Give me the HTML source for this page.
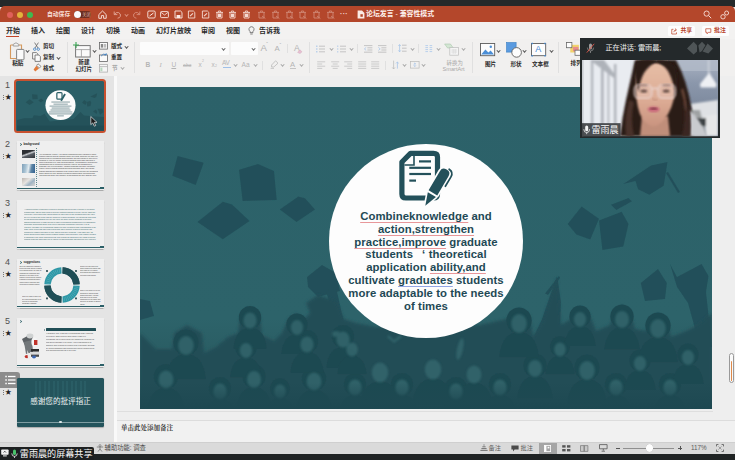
<!DOCTYPE html>
<html lang="zh">
<head>
<meta charset="utf-8">
<title>论坛发言 - 兼容性模式</title>
<style>
*{box-sizing:border-box;margin:0;padding:0}
html,body{width:735px;height:460px;overflow:hidden;background:#ececec}
body{position:relative;font-family:"Liberation Sans","Noto Sans CJK SC",sans-serif;color:#333;font-size:7px;line-height:1}
.a{position:absolute}
.t{position:absolute;white-space:nowrap;line-height:1}
svg{position:absolute;overflow:visible}
/* top */
#topdark{left:0;top:0;width:735px;height:7px;background:#25292a}
#titlebar{left:0;top:6.4px;width:735px;height:16px;background:#b4472b;border-radius:5px 5px 0 0}
#tabs{left:0;top:22.4px;width:735px;height:16.6px;background:#f3f2f1}
#ribbon{left:0;top:39px;width:735px;height:38px;background:#f1f0ef;border-bottom:1.6px solid #dedede}
.tab{top:27.1px;font-size:7px;color:#2b2b2b}
.rl{font-size:5.6px;color:#2a2a2a}
.sep{position:absolute;width:1px;background:#e0e0e0}
.dd{position:absolute;width:2.5px;height:2.5px;border-right:0.85px solid currentColor;border-bottom:0.85px solid currentColor;transform:translate(0.3px,-1px) rotate(45deg);color:#555}
.gi{stroke:#a9a9a9;fill:none;stroke-width:0.8}
/* panels */
#thumbs{left:0;top:76px;width:114px;height:367px;background:#e4e4e4}
#vdiv{left:114px;top:76px;width:2.6px;height:367px;background:#f9f9f9}
#work{left:116.6px;top:76px;width:619px;height:345px;background:#eeeeee}
#notes{left:116.6px;top:420.4px;width:619px;height:22px;background:#f1f1f1;border-top:1px solid #dcdcdc}
#status{left:0;top:442px;width:735px;height:12px;background:#dadada;border-top:1px solid #cfcfcf}
#botdark{left:0;top:454px;width:735px;height:6px;background:#1f2324}
.num{font-size:9px;color:#505050;left:5px}
.star{font-size:6.6px;color:#222;left:5px}
.ur{text-decoration:underline;text-decoration-color:#e8979a;text-decoration-thickness:0.9px;text-underline-offset:1.6px;text-decoration-skip-ink:none}
.ub{text-decoration:underline;text-decoration-color:#93a6e6;text-decoration-thickness:1.3px;text-underline-offset:1.7px;text-decoration-skip-ink:none}
.th{position:absolute;left:17px;width:87px;height:49px;background:#efefef;overflow:hidden;box-shadow:0 0.5px 1px rgba(0,0,0,.25)}
</style>
</head>
<body>
<!-- ======= top chrome ======= -->
<div class="a" id="topdark"></div>
<div class="a" id="titlebar"></div>
<div class="a" id="tabs"></div>
<div class="a" id="ribbon"></div>
<!--TITLEBAR-->
<div class="a" style="left:6.6px;top:11.6px;width:6px;height:6px;border-radius:50%;background:#e0605a"></div>
<div class="a" style="left:17px;top:11.6px;width:6px;height:6px;border-radius:50%;background:#e2b33c"></div>
<div class="a" style="left:27.3px;top:11.6px;width:6px;height:6px;border-radius:50%;background:#3fb950"></div>
<div class="t" style="left:47px;top:11.6px;font-size:5.8px;color:#f6ddd6;font-weight:bold">自动保存</div>
<div class="a" style="left:74px;top:11.4px;width:16.6px;height:6.6px;border-radius:3.3px;background:#6d2e1f"></div>
<div class="a" style="left:74.2px;top:11.2px;width:7px;height:7px;border-radius:50%;background:#fbfbfb"></div>
<div class="t" style="left:82.3px;top:12.6px;font-size:4.2px;color:#d9b5ab">关闭</div>
<svg style="left:98px;top:10px" width="9" height="9" viewBox="0 0 9 9"><path d="M0.8,4.6 L4.5,1 L8.2,4.6 V8.3 H5.6 V5.6 H3.4 V8.3 H0.8 Z" fill="none" stroke="#fbeae5" stroke-width="0.9" stroke-linejoin="round"/></svg>
<svg style="left:112.5px;top:10px" width="9" height="9" viewBox="0 0 9 9"><path d="M1.2,1.5 V4.6 H4.3 M1.4,4.4 Q3.2,1.8 5.6,2.6 Q8,3.6 7.4,6.2 Q6.8,8 4.6,8.2" fill="none" stroke="#e3a898" stroke-width="0.9"/></svg>
<svg style="left:132px;top:10px" width="9" height="9" viewBox="0 0 9 9"><path d="M7.8,1.5 V4.6 H4.7 M7.6,4.4 Q5.8,1.8 3.4,2.6 Q1,3.6 1.6,6.2 Q2.2,8 4.4,8.2" fill="none" stroke="#d98f7c" stroke-width="0.9"/></svg>
<svg style="left:146.5px;top:10px" width="9" height="9" viewBox="0 0 9 9"><rect x="0.8" y="1" width="7.4" height="7" rx="1.2" fill="none" stroke="#fbeae5" stroke-width="0.9"/><path d="M2.5,6 L6.5,3" stroke="#fbeae5" stroke-width="1"/></svg>
<svg style="left:160px;top:10px" width="9" height="9" viewBox="0 0 9 9"><rect x="0.6" y="1.6" width="7.8" height="6" rx="0.8" fill="none" stroke="#fbeae5" stroke-width="0.9"/><path d="M0.8,2.2 L4.5,5 L8.2,2.2" fill="none" stroke="#fbeae5" stroke-width="0.8"/></svg>
<svg style="left:173.5px;top:10px" width="9" height="9" viewBox="0 0 9 9"><path d="M1,1 H6.6 L8,2.4 V8 H1 Z" fill="none" stroke="#fbeae5" stroke-width="0.9"/><rect x="2.6" y="5" width="3.8" height="3" fill="#fbeae5"/></svg>
<svg style="left:187px;top:10px" width="9" height="9" viewBox="0 0 9 9"><path d="M1.4,1 H6.4 L7.8,2.4 V8 H1.4 Z" fill="none" stroke="#f4d9d1" stroke-width="0.9"/><path d="M3,6.2 L6,3.4" stroke="#f4d9d1" stroke-width="1.1"/></svg>
<svg style="left:200.75px;top:10px" width="9" height="9" viewBox="0 0 9 9"><path d="M1.4,1 H6.4 L7.8,2.4 V8 H1.4 Z" fill="none" stroke="#f4d9d1" stroke-width="0.9"/><path d="M3,6.2 L6,3.4" stroke="#f4d9d1" stroke-width="1.1"/></svg>
<svg style="left:214.5px;top:10px" width="9" height="9" viewBox="0 0 9 9"><path d="M1,2.4 H8 M2,2.4 V8 H7 V2.4 M3.4,2.2 V1 H5.6 V2.2" fill="none" stroke="#f4d9d1" stroke-width="0.9"/><rect x="3" y="3.6" width="3" height="3.4" fill="#f4d9d1"/></svg>
<svg style="left:228.25px;top:10px" width="9" height="9" viewBox="0 0 9 9"><path d="M1,2.4 H8 M2,2.4 V8 H7 V2.4 M3.4,2.2 V1 H5.6 V2.2" fill="none" stroke="#f4d9d1" stroke-width="0.9"/><rect x="3" y="3.6" width="3" height="3.4" fill="#f4d9d1"/></svg>
<svg style="left:242px;top:10px" width="9" height="9" viewBox="0 0 9 9"><path d="M1,2.4 H8 M2,2.4 V8 H7 V2.4 M3.4,2.2 V1 H5.6 V2.2" fill="none" stroke="#f4d9d1" stroke-width="0.9"/><rect x="3" y="3.6" width="3" height="3.4" fill="#f4d9d1"/></svg>
<svg style="left:257px;top:10px" width="9" height="9" viewBox="0 0 9 9" opacity=".45"><path d="M1,2.4 H8 M2,2.4 V8 H7 V2.4 M3.4,2.2 V1 H5.6 V2.2" fill="none" stroke="#f4d9d1" stroke-width="0.9"/><path d="M5,6 L8.4,8.6" stroke="#f4d9d1" stroke-width="0.9"/></svg>
<svg style="left:270.75px;top:10px" width="9" height="9" viewBox="0 0 9 9" opacity=".45"><path d="M1,2.4 H8 M2,2.4 V8 H7 V2.4 M3.4,2.2 V1 H5.6 V2.2" fill="none" stroke="#f4d9d1" stroke-width="0.9"/><path d="M5,6 L8.4,8.6" stroke="#f4d9d1" stroke-width="0.9"/></svg>
<svg style="left:284.5px;top:10px" width="9" height="9" viewBox="0 0 9 9" opacity=".45"><path d="M1,2.4 H8 M2,2.4 V8 H7 V2.4 M3.4,2.2 V1 H5.6 V2.2" fill="none" stroke="#f4d9d1" stroke-width="0.9"/><path d="M5,6 L8.4,8.6" stroke="#f4d9d1" stroke-width="0.9"/></svg>
<svg style="left:298.25px;top:10px" width="9" height="9" viewBox="0 0 9 9" opacity=".45"><path d="M1,2.4 H8 M2,2.4 V8 H7 V2.4 M3.4,2.2 V1 H5.6 V2.2" fill="none" stroke="#f4d9d1" stroke-width="0.9"/><path d="M5,6 L8.4,8.6" stroke="#f4d9d1" stroke-width="0.9"/></svg>
<svg style="left:312px;top:10px" width="9" height="9" viewBox="0 0 9 9" opacity=".45"><path d="M1,2.4 H8 M2,2.4 V8 H7 V2.4 M3.4,2.2 V1 H5.6 V2.2" fill="none" stroke="#f4d9d1" stroke-width="0.9"/><path d="M5,6 L8.4,8.6" stroke="#f4d9d1" stroke-width="0.9"/></svg>
<svg style="left:325.75px;top:10px" width="9" height="9" viewBox="0 0 9 9" opacity=".45"><path d="M1,2.4 H8 M2,2.4 V8 H7 V2.4 M3.4,2.2 V1 H5.6 V2.2" fill="none" stroke="#f4d9d1" stroke-width="0.9"/><path d="M5,6 L8.4,8.6" stroke="#f4d9d1" stroke-width="0.9"/></svg>
<div class="dd" style="left:125.4px;top:14px;color:#d98f7c"></div>
<div class="t" style="left:340px;top:10.2px;font-size:7px;color:#f4d9d1;font-weight:bold;letter-spacing:.3px">···</div>
<svg style="left:356.5px;top:10px" width="8" height="9" viewBox="0 0 8 9"><path d="M0.6,0.6 H5 L7.4,3 V8.4 H0.6 Z" fill="#fbeae5"/><path d="M3.4,4.2 h2.4 v2.6 h-2.4z" fill="#b4472b"/></svg>
<div class="t" style="left:366px;top:11.2px;font-size:6.9px;color:#fdf1ee;font-weight:bold">论坛发言 <span style="font-weight:normal"> - </span> 兼容性模式</div>
<svg style="left:702.6px;top:9.9px" width="9" height="9" viewBox="0 0 9 9"><circle cx="3.6" cy="3.6" r="2.6" fill="none" stroke="#f6ddd6" stroke-width="0.9"/><path d="M5.6,5.6 L8.2,8.2" stroke="#f6ddd6" stroke-width="1"/></svg>
<svg style="left:720px;top:9.5px" width="10" height="10" viewBox="0 0 10 10"><circle cx="6.6" cy="3" r="2" fill="none" stroke="#f6ddd6" stroke-width="0.9"/><circle cx="3" cy="6.8" r="2.2" fill="none" stroke="#f6ddd6" stroke-width="0.9"/></svg>
<!--/TITLEBAR-->
<!--TABS-->
<div class="t tab" style="left:6px;font-weight:bold">开始</div>
<div class="t tab" style="left:31px;font-weight:bold">插入</div>
<div class="t tab" style="left:56px;font-weight:bold">绘图</div>
<div class="t tab" style="left:81px;font-weight:bold">设计</div>
<div class="t tab" style="left:106px;font-weight:bold">切换</div>
<div class="t tab" style="left:131px;font-weight:bold">动画</div>
<div class="t tab" style="left:156px;font-weight:bold">幻灯片放映</div>
<div class="t tab" style="left:201px;font-weight:bold">审阅</div>
<div class="t tab" style="left:226px;font-weight:bold">视图</div>
<div class="a" style="left:6px;top:35.5px;width:13.4px;height:1.3px;background:#c0452a"></div>
<svg style="left:248px;top:26px" width="7" height="10" viewBox="0 0 7 10"><path d="M3.5,0.7 A2.6,2.6 0 0 1 5,5.4 V6.6 H2 V5.4 A2.6,2.6 0 0 1 3.5,0.7 Z M2.3,8 H4.7" fill="none" stroke="#555" stroke-width="0.7"/></svg>
<div class="t tab" style="left:259px;font-weight:bold">告诉我</div>
<div class="a" style="left:668.4px;top:26px;width:26.4px;height:10.2px;background:#fdfdfd;border-radius:1.5px"></div>
<svg style="left:671.4px;top:27.8px" width="6.6" height="6.6" viewBox="0 0 7 7"><path d="M2.6,1.4 H0.8 V6.4 H5.8 V4.6 M3,4.4 Q3.2,2 5.4,2 M4.2,0.6 L5.8,2 L4.2,3.4" fill="none" stroke="#bf4a2f" stroke-width="0.8"/></svg>
<div class="t" style="left:680.4px;top:28.3px;font-size:5.9px;color:#b8432a;font-weight:bold">共享</div>
<div class="a" style="left:702px;top:26px;width:26.8px;height:10.2px;background:#fdfdfd;border-radius:1.5px"></div>
<svg style="left:705px;top:27.9px" width="6.6" height="6.6" viewBox="0 0 7 7"><path d="M0.8,0.8 H6.2 V4.6 H3.6 L2.2,6.2 V4.6 H0.8 Z" fill="none" stroke="#bf4a2f" stroke-width="0.8" stroke-linejoin="round"/></svg>
<div class="t" style="left:714px;top:28.3px;font-size:5.9px;color:#b8432a;font-weight:bold">批注</div>
<!--/TABS-->
<!--RIBBON-->
<svg style="left:8px;top:42px" width="17" height="19" viewBox="0 0 17 19" ><path d="M2.5,3 H5 M11,3 H13.5 V7 M2.5,3 V16.5 H8" fill="none" stroke="#d69a5e" stroke-width="1.1"/><path d="M5.2,4 V2.4 L8,0.8 L10.8,2.4 V4 Z" fill="#f5f5f5" stroke="#8a8a8a" stroke-width="0.8"/><rect x="8.6" y="7.4" width="7.4" height="10.4" rx="0.8" fill="#fafafa" stroke="#777" stroke-width="0.9"/></svg>
<div class="dd" style="left:25.5px;top:50px;color:#555"></div>
<div class="t rl" style="left:12.2px;top:61px;font-weight:bold">粘贴</div>
<svg style="left:33px;top:42px" width="7" height="9" viewBox="0 0 7 9" ><path d="M1.6,0.6 L5,6 M5.4,0.6 L2,6" stroke="#666" stroke-width="0.8" fill="none"/><circle cx="1.7" cy="7.2" r="1.2" fill="none" stroke="#3b7fc4" stroke-width="0.8"/><circle cx="5.3" cy="7.2" r="1.2" fill="none" stroke="#3b7fc4" stroke-width="0.8"/></svg>
<div class="t rl" style="left:43px;top:44px;font-weight:bold">剪切</div>
<svg style="left:32px;top:52px" width="9" height="10" viewBox="0 0 9 10" ><path d="M0.6,0.6 H4.4 L6,2.2 V7 H0.6 Z" fill="#fafafa" stroke="#666" stroke-width="0.8"/><path d="M3,3 H6.8 L8.4,4.6 V9.4 H3 Z" fill="#fafafa" stroke="#666" stroke-width="0.8"/></svg>
<div class="t rl" style="left:43px;top:54.6px;font-weight:bold">复制</div>
<div class="dd" style="left:57px;top:56.5px;color:#555"></div>
<svg style="left:32.5px;top:63px" width="9" height="9" viewBox="0 0 9 9" ><path d="M5,0.8 L8,3.4 L6.4,5 L3.6,2.4 Z" fill="#fafafa" stroke="#666" stroke-width="0.7"/><path d="M3.4,2.8 L6,5.4 L2.2,8.4 L0.6,6.6 Z" fill="#e07a3a"/></svg>
<div class="t rl" style="left:43px;top:66px;font-weight:bold">格式</div>
<div class="sep" style="left:67px;top:42px;height:31px"></div>
<svg style="left:72.5px;top:41.5px" width="18" height="16" viewBox="0 0 18 16" ><rect x="2.6" y="3.6" width="14.6" height="11.4" fill="#fafafa" stroke="#777" stroke-width="1"/><path d="M2.6,7.6 H17.2 M8.4,7.6 V15" stroke="#999" stroke-width="0.8" fill="none"/><path d="M3,0 V6 M0,3 H6" stroke="#3aa655" stroke-width="1.1"/></svg>
<div class="dd" style="left:92.5px;top:50px;color:#555"></div>
<div class="t rl" style="left:78.3px;top:60.2px;font-weight:bold">新建</div>
<div class="t rl" style="left:75.4px;top:67px;font-weight:bold">幻灯片</div>
<svg style="left:99px;top:42px" width="9" height="8" viewBox="0 0 9 8" ><rect x="0.5" y="0.5" width="8" height="6.6" fill="#fafafa" stroke="#666" stroke-width="0.8"/><rect x="1.8" y="2" width="2.4" height="3.6" fill="#888"/><rect x="5" y="2" width="2.2" height="3.6" fill="#bbb"/></svg>
<div class="t rl" style="left:111px;top:44px;font-weight:bold">版式</div>
<div class="dd" style="left:125px;top:46px;color:#555"></div>
<svg style="left:99px;top:52.6px" width="9" height="9" viewBox="0 0 9 9" ><rect x="0.5" y="2" width="8" height="6.4" fill="#fafafa" stroke="#666" stroke-width="0.8"/><path d="M2,3.2 Q4,0 7,1.6 M7.2,0.2 V2 H5.4" fill="none" stroke="#3b7fc4" stroke-width="0.8"/></svg>
<div class="t rl" style="left:111px;top:54.6px;font-weight:bold">重置</div>
<svg style="left:99px;top:63.5px" width="9" height="9" viewBox="0 0 9 9" ><rect x="0.5" y="0.5" width="8" height="7.6" fill="#f6f6f6" stroke="#b0b0b0" stroke-width="0.8"/><path d="M0.5,2.6 H8.5" stroke="#b0b0b0" stroke-width="0.8"/><rect x="1.4" y="3.6" width="2" height="3.6" fill="#b7d6bd"/></svg>
<div class="t rl" style="left:112px;top:65.8px;color:#a8a8a8;font-weight:bold">节</div>
<div class="dd" style="left:120.5px;top:67.4px;color:#aaa"></div>
<div class="sep" style="left:134px;top:42px;height:31px"></div>
<div class="a" style="left:140px;top:42.2px;width:88.5px;height:12.4px;background:#fcfcfc;border-radius:1px"></div>
<div class="dd" style="left:222px;top:47.6px;color:#666"></div>
<div class="a" style="left:230.5px;top:42.2px;width:27px;height:12.4px;background:#fcfcfc;border-radius:1px"></div>
<div class="dd" style="left:251.5px;top:47.6px;color:#666"></div>
<div class="t rl" style="left:260.5px;top:43px;font-size:9.6px;color:#b3b3b3">A</div>
<div class="t rl" style="left:266.3px;top:42.4px;font-size:5px;color:#b3b3b3">ˆ</div>
<div class="t rl" style="left:274.5px;top:44.6px;font-size:7.8px;color:#b3b3b3">A</div>
<div class="t rl" style="left:279.6px;top:43px;font-size:5px;color:#b3b3b3">ˇ</div>
<div class="sep" style="left:287px;top:44px;height:9px"></div>
<div class="t rl" style="left:294px;top:43.6px;font-size:8.6px;color:#b3b3b3">A</div>
<svg style="left:297px;top:49px" width="6" height="5" viewBox="0 0 6 5" ><path d="M0.6,3.4 L3,0.8 L5,2.8 L3,4.6 Z" fill="#e8bfd2" stroke="#c9a3b5" stroke-width="0.4"/></svg>
<div class="t rl" style="left:145.6px;top:61.6px;font-size:6.6px;color:#b5b5b5;font-weight:bold">B</div>
<div class="t rl" style="left:159.4px;top:61.6px;font-size:6.6px;color:#b5b5b5;font-style:italic;font-family:'Liberation Serif',serif">I</div>
<div class="t rl" style="left:171.4px;top:61.6px;font-size:6.6px;color:#b5b5b5;text-decoration:underline">U</div>
<div class="t rl" style="left:183px;top:62.6px;font-size:5.2px;color:#b9b9b9;text-decoration:line-through">abc</div>
<div class="t rl" style="left:198.4px;top:62px;font-size:6.4px;color:#b5b5b5">x</div>
<div class="t rl" style="left:202px;top:60.4px;font-size:3.6px;color:#b5b5b5">2</div>
<div class="t rl" style="left:211.4px;top:62px;font-size:6.4px;color:#b5b5b5">x</div>
<div class="t rl" style="left:215px;top:65.4px;font-size:3.6px;color:#b5b5b5">2</div>
<div class="t rl" style="left:222px;top:60.4px;font-size:6.4px;color:#b5b5b5;letter-spacing:-0.4px">AV</div>
<div class="a" style="left:222.5px;top:67.2px;width:8px;height:0.8px;background:#9fc0e8"></div>
<div class="dd" style="left:234px;top:64px;color:#aaa"></div>
<div class="t rl" style="left:241.5px;top:61.6px;font-size:6.6px;color:#b5b5b5">Aa</div>
<div class="dd" style="left:254px;top:64px;color:#aaa"></div>
<div class="sep" style="left:262px;top:61px;height:9px"></div>
<svg style="left:269.5px;top:60px" width="9" height="9" viewBox="0 0 9 9" ><path d="M5.6,0.8 L8,3.2 L3.8,7 L1.6,7 L1.6,5 Z" fill="none" stroke="#b9b9b9" stroke-width="0.8"/><path d="M0.6,8.4 H4" stroke="#c9c9c9" stroke-width="1"/></svg>
<div class="dd" style="left:281px;top:64px;color:#aaa"></div>
<div class="t rl" style="left:290px;top:61px;font-size:7.6px;color:#b5b5b5">A</div>
<div class="a" style="left:289.6px;top:68px;width:6.4px;height:1.1px;background:#c4c4c4"></div>
<div class="dd" style="left:300px;top:64px;color:#aaa"></div>
<div class="sep" style="left:309px;top:42px;height:31px"></div>
<svg style="left:316px;top:44.6px" width="9" height="8" viewBox="0 0 9 8" ><path d="M3,1.2 H9" stroke="#b9b9b9" stroke-width="0.8"/><rect x="0.2" y="0.6" width="1.2" height="1.2" fill="#9fc0e8"/><path d="M3,4 H9" stroke="#b9b9b9" stroke-width="0.8"/><rect x="0.2" y="3.4" width="1.2" height="1.2" fill="#9fc0e8"/><path d="M3,6.8 H9" stroke="#b9b9b9" stroke-width="0.8"/><rect x="0.2" y="6.2" width="1.2" height="1.2" fill="#9fc0e8"/></svg>
<div class="dd" style="left:329.5px;top:47.6px;color:#aaa"></div>
<svg style="left:337px;top:44.6px" width="9" height="8" viewBox="0 0 9 8" ><path d="M3,1.2 H9" stroke="#b9b9b9" stroke-width="0.8"/><rect x="0.4" y="0.5" width="0.8" height="1.4" fill="#9fc0e8"/><path d="M3,4 H9" stroke="#b9b9b9" stroke-width="0.8"/><rect x="0.4" y="3.3" width="0.8" height="1.4" fill="#9fc0e8"/><path d="M3,6.8 H9" stroke="#b9b9b9" stroke-width="0.8"/><rect x="0.4" y="6.1" width="0.8" height="1.4" fill="#9fc0e8"/></svg>
<div class="dd" style="left:350px;top:47.6px;color:#aaa"></div>
<div class="sep" style="left:357px;top:44px;height:9px"></div>
<svg style="left:363.6px;top:44.6px" width="9" height="8" viewBox="0 0 9 8" ><path d="M0,0.6 H8.4 M3.4,2.8 H8.4 M3.4,5 H8.4 M0,7.2 H8.4" stroke="#b9b9b9" stroke-width="0.8"/><path d="M2.2,2.4 L0.4,3.9 L2.2,5.4" fill="none" stroke="#9fc0e8" stroke-width="0.7"/></svg>
<svg style="left:377.6px;top:44.6px" width="9" height="8" viewBox="0 0 9 8" ><path d="M0,0.6 H8.4 M3.4,2.8 H8.4 M3.4,5 H8.4 M0,7.2 H8.4" stroke="#b9b9b9" stroke-width="0.8"/><path d="M0.4,2.4 L2.2,3.9 L0.4,5.4" fill="none" stroke="#9fc0e8" stroke-width="0.7"/></svg>
<div class="sep" style="left:392px;top:44px;height:9px"></div>
<svg style="left:397.6px;top:44px" width="9" height="9" viewBox="0 0 9 9" ><path d="M4,1.2 H8.6 M4,4.2 H8.6 M4,7.2 H8.6" stroke="#b9b9b9" stroke-width="0.8"/><path d="M1.6,0.6 V7.8 M0.4,2 L1.6,0.6 L2.8,2 M0.4,6.4 L1.6,7.8 L2.8,6.4" fill="none" stroke="#9fc0e8" stroke-width="0.7"/></svg>
<div class="dd" style="left:410.6px;top:47.6px;color:#aaa"></div>
<div class="sep" style="left:418px;top:44px;height:9px"></div>
<svg style="left:425px;top:44.6px" width="8" height="8" viewBox="0 0 8 8" ><path d="M0.4,0.6 H3 M0.4,2.6 H3 M0.4,4.6 H3 M0.4,6.6 H3 M4.6,0.6 H7.2 M4.6,2.6 H7.2 M4.6,4.6 H7.2 M4.6,6.6 H7.2" stroke="#a9c6ea" stroke-width="0.8"/></svg>
<div class="dd" style="left:436.6px;top:47.6px;color:#aaa"></div>
<svg style="left:443.6px;top:42.6px" width="16" height="13" viewBox="0 0 16 13" ><path d="M0.6,1 H6.4 L9.4,5 H3.6 Z" fill="#d3e6d3" stroke="#a9c7ab" stroke-width="0.6"/><rect x="5.8" y="4.6" width="8.8" height="7.6" fill="#f4f4f4" stroke="#bdbdbd" stroke-width="0.7"/><path d="M7.4,7 H13 M7.4,9 H13 M9.2,6.2 V11 M11.2,6.2 V11" stroke="#cfcfcf" stroke-width="0.5"/></svg>
<div class="dd" style="left:462px;top:47.6px;color:#aaa"></div>
<div class="t rl" style="left:446.6px;top:60.6px;color:#a9a9a9;font-size:5.4px">转换为</div>
<div class="t rl" style="left:442.6px;top:66.6px;color:#a9a9a9;font-size:5.6px">SmartArt</div>
<svg style="left:317px;top:61px" width="9" height="9" viewBox="0 0 9 9" ><path d="M0.2,0.8 h8" stroke="#c2c2c2" stroke-width="0.8"/><path d="M0.2,3.0 h5" stroke="#c2c2c2" stroke-width="0.8"/><path d="M0.2,5.2 h8" stroke="#c2c2c2" stroke-width="0.8"/><path d="M0.2,7.4 h5" stroke="#c2c2c2" stroke-width="0.8"/></svg>
<svg style="left:330.6px;top:61px" width="9" height="9" viewBox="0 0 9 9" ><path d="M0.2,0.8 h8" stroke="#c2c2c2" stroke-width="0.8"/><path d="M1.7,3.0 h5" stroke="#c2c2c2" stroke-width="0.8"/><path d="M0.2,5.2 h8" stroke="#c2c2c2" stroke-width="0.8"/><path d="M1.7,7.4 h5" stroke="#c2c2c2" stroke-width="0.8"/></svg>
<svg style="left:344px;top:61px" width="9" height="9" viewBox="0 0 9 9" ><path d="M0.2,0.8 h8" stroke="#c2c2c2" stroke-width="0.8"/><path d="M3.2,3.0 h5" stroke="#c2c2c2" stroke-width="0.8"/><path d="M0.2,5.2 h8" stroke="#c2c2c2" stroke-width="0.8"/><path d="M3.2,7.4 h5" stroke="#c2c2c2" stroke-width="0.8"/></svg>
<svg style="left:357.6px;top:61px" width="9" height="9" viewBox="0 0 9 9" ><path d="M0.2,0.8 h8" stroke="#c2c2c2" stroke-width="0.8"/><path d="M0.2,3.0 h8" stroke="#c2c2c2" stroke-width="0.8"/><path d="M0.2,5.2 h8" stroke="#c2c2c2" stroke-width="0.8"/><path d="M0.2,7.4 h8" stroke="#c2c2c2" stroke-width="0.8"/></svg>
<svg style="left:371px;top:61px" width="9" height="9" viewBox="0 0 9 9" ><path d="M0.2,0.8 h8" stroke="#c2c2c2" stroke-width="0.8"/><path d="M0.2,3.0 h8" stroke="#c2c2c2" stroke-width="0.8"/><path d="M0.2,5.2 h8" stroke="#c2c2c2" stroke-width="0.8"/><path d="M0.2,7.4 h8" stroke="#c2c2c2" stroke-width="0.8"/></svg>
<div class="sep" style="left:385px;top:61px;height:9px"></div>
<svg style="left:391.6px;top:60.4px" width="8" height="10" viewBox="0 0 8 10" ><path d="M1.6,0.6 V9 M0.2,7.4 L1.6,9 L3,7.4" fill="none" stroke="#b9b9b9" stroke-width="0.7"/><path d="M5.4,2 V8.6 M4,3.4 L5.4,2 L6.8,3.4" fill="none" stroke="#9fc0e8" stroke-width="0.7"/></svg>
<div class="dd" style="left:403.4px;top:64px;color:#aaa"></div>
<svg style="left:409.6px;top:61px" width="10" height="8" viewBox="0 0 10 8" ><rect x="0.5" y="0.5" width="8.6" height="6.6" fill="none" stroke="#b9b9b9" stroke-width="0.7"/><path d="M4.8,2 V5.6 M3.6,3.2 L4.8,2 L6,3.2 M3.6,4.4 L4.8,5.6 L6,4.4" fill="none" stroke="#9fc0e8" stroke-width="0.6"/></svg>
<div class="dd" style="left:422.4px;top:64px;color:#aaa"></div>
<div class="sep" style="left:472px;top:42px;height:31px"></div>
<svg style="left:479.6px;top:43px" width="15.4" height="13.4" viewBox="0 0 15.4 13.4" ><rect x="0.5" y="0.5" width="14.2" height="12.2" fill="#fdfdfd" stroke="#5c5c5c" stroke-width="0.9"/><path d="M1.2,11.6 L5.4,6.4 L8.4,9.6 L10.6,7.6 L14,11.6 Z" fill="#4a8ed6"/><circle cx="10.8" cy="3.8" r="1.2" fill="#4a8ed6"/></svg>
<div class="dd" style="left:497px;top:50px;color:#555"></div>
<div class="t rl" style="left:485px;top:61.6px;font-weight:bold">图片</div>
<svg style="left:506px;top:42px" width="16" height="16" viewBox="0 0 16 16" ><rect x="0.5" y="0.5" width="9.6" height="9.6" fill="#5a9be0" stroke="#3b7fc4" stroke-width="0.6"/><circle cx="10.6" cy="10.4" r="4.8" fill="#fdfdfd" stroke="#5c5c5c" stroke-width="0.9"/></svg>
<div class="dd" style="left:523.4px;top:50px;color:#555"></div>
<div class="t rl" style="left:510.4px;top:61.6px;font-weight:bold">形状</div>
<svg style="left:531px;top:43px" width="15.4" height="13.4" viewBox="0 0 15.4 13.4" ><rect x="0.5" y="0.5" width="14.2" height="12.2" fill="#fdfdfd" stroke="#5c5c5c" stroke-width="0.9"/><path d="M0.5,0.5 h1.4 M13.3,0.5 h1.4 M0.5,12.7 h1.4 M13.3,12.7 h1.4" stroke="#4a8ed6" stroke-width="1.4"/></svg>
<div class="t rl" style="left:535.2px;top:45px;font-size:9px;color:#3f86d2">A</div>
<div class="dd" style="left:549.6px;top:50px;color:#555"></div>
<div class="t rl" style="left:532px;top:61.6px;font-weight:bold">文本框</div>
<div class="sep" style="left:558px;top:42px;height:31px"></div>
<svg style="left:565.5px;top:42px" width="15" height="14" viewBox="0 0 14 12" preserveAspectRatio="none"><rect x="4" y="2.4" width="8" height="6.6" fill="#f2d36b"/><rect x="6.6" y="4.2" width="5" height="3.8" fill="#e88c8c"/><rect x="0.5" y="0.5" width="5" height="4.4" fill="#fdfdfd" stroke="#666" stroke-width="0.7"/><rect x="8.4" y="7" width="5" height="4.4" fill="#fdfdfd" stroke="#666" stroke-width="0.7"/></svg>
<div class="t rl" style="left:570.6px;top:61.2px;font-weight:bold">排列</div>
<!--/RIBBON-->
<!-- ======= panels ======= -->
<div class="a" id="thumbs"></div>
<div class="a" id="vdiv"></div>
<div class="a" id="work"></div>
<div class="a" id="notes"></div>
<!--THUMBS-->
<!-- thumb 1 (selected) -->
<div class="t num" style="top:81px">1</div><div class="t star" style="top:94px">★</div><div class="a" style="left:2.6px;top:95.0px;width:0;height:5px;border-left:0.7px dotted #777"></div>
<div class="a" style="left:14px;top:79.4px;width:92px;height:53.2px;border:2px solid #c8512f;border-radius:3.5px;background:#2b5f67"></div>
<svg style="left:17px;top:82px" width="87" height="48.5" viewBox="0 0 572 322" preserveAspectRatio="none">
<rect width="572" height="322" fill="#2b5f67"/>
<g fill="#255259"><polygon points="99,82 134,84 136,113 102,114"/><polygon points="57,135 83,115 110,134 83,152"/><polygon points="140,122 158,110 175,122 156,135"/><polygon points="483,97 527,75 521,99 509,107"/><polygon points="428,137 442,120 459,132 450,153"/><polygon points="459,133 482,125 488,137 483,160 462,163"/><polygon points="500,196 518,182 527,196 525,212"/><polygon points="530,177 562,177 568,200 546,217"/></g>
<path fill="#24525a" d="M0,252 L47,241 L101,240 L111,220 L155,226 L181,211 L215,262 L372,246 L417,200 L440,222 L518,229 L572,232 V322 H0 Z"/>
<rect y="290" width="572" height="32" fill="#204c54"/>
<circle cx="286" cy="154" r="99" fill="#fcfcfc"/>
<rect x="262" y="70" width="34" height="44" rx="6" fill="none" stroke="#2b5f67" stroke-width="8"/>
<line x1="316" y1="80" x2="290" y2="124" stroke="#2b5f67" stroke-width="12"/>
<g stroke="#6f8c92" stroke-width="5.5"><line x1="226" y1="133" x2="348" y2="133"/><line x1="240" y1="147" x2="334" y2="147"/><line x1="214" y1="160" x2="358" y2="160"/><line x1="228" y1="173" x2="346" y2="173"/><line x1="220" y1="186" x2="352" y2="186"/><line x1="210" y1="199" x2="364" y2="199"/><line x1="208" y1="212" x2="366" y2="212"/><line x1="264" y1="225" x2="308" y2="225"/></g>
</svg>
<!-- cursor -->
<svg style="left:90px;top:116px" width="8" height="11" viewBox="0 0 8 11"><path d="M0.8,0.5 V8.6 L2.8,6.9 L4.3,10.2 L5.7,9.6 L4.3,6.4 H7 Z" fill="#1b1b1b" stroke="#e8e8e8" stroke-width="0.7"/></svg>
<!-- thumb 2 -->
<div class="t num" style="top:140px">2</div><div class="t star" style="top:153px">★</div><div class="a" style="left:2.6px;top:154.0px;width:0;height:5px;border-left:0.7px dotted #777"></div>
<div class="th" style="top:141px">
<div class="t" style="left:6.5px;top:1.6px;font-size:2.8px;font-weight:bold;color:#222">background</div>
<div class="a" style="left:2px;top:1.5px;width:3px;height:3px;border-right:1px solid #2b5f67;border-top:1px solid #2b5f67;transform:rotate(45deg) scale(.7)"></div>
<div class="a" style="left:5px;top:8.5px;width:12.5px;height:8.5px;background:linear-gradient(160deg,#2c2f33 0,#2c2f33 35%,#c9ccd0 48%,#5a5f66 60%,#2f3337 100%)"></div>
<div class="a" style="left:5px;top:23px;width:12.5px;height:8.5px;background:linear-gradient(100deg,#7fa0b8 0,#a9c3d4 30%,#e4ecf0 50%,#5f86a6 70%,#2f5f8f 100%)"></div>
<div class="a" style="left:5px;top:37px;width:12.5px;height:7.5px;background:linear-gradient(140deg,#bdb7b2 0,#e6e3e0 40%,#9fb4c4 65%,#d9d6d2 100%)"></div>
<div class="a" style="left:18.8px;top:7px;width:0;height:39px;border-left:0.7px dotted #5f8990"></div>
<div class="a" style="left:22px;top:12.6px;width:59px;height:23px;font-size:1.6px;line-height:2.12px;color:#333;white-space:normal;overflow:hidden;letter-spacing:0">As a professional, creative, I feel that the postdoctoral degree education of China contains a different from the academic degree as it tends, which may pay high-level talents/experts of a professional skilled demand. The main purpose is "solve all key questions" or "unify all" practice-oriented professional talent rather than study in terms of theoretical level, study theories/practices. And emphasizes / somehow the understanding and for pointing out problems. However, the management of knowledge, into "no fixed industry". Combine knowledge and action, strengthen practice, improve graduate students theoretical application ability, and cultivate graduate students more adaptable to the needs of times. Therefore the professional degree should pay more attention to practical teaching bases, joint training with enterprises and double-tutor guidance, so that students can apply what they have learned.</div>
<div class="a" style="left:0;top:47.2px;width:87px;height:0.8px;background:#2b5f67"></div>
<div class="a" style="left:83px;top:45.6px;width:4px;height:2.6px;background:#2b5f67"></div>
</div>
<!-- thumb 3 -->
<div class="t num" style="top:199px">3</div><div class="t star" style="top:212px">★</div><div class="a" style="left:2.6px;top:213.0px;width:0;height:5px;border-left:0.7px dotted #777"></div>
<div class="th" style="top:200px">
<div class="a" style="left:7px;top:8.4px;width:73px;height:32.6px;font-size:1.72px;line-height:2.5px;color:#2b5f67;white-space:normal;overflow:hidden">A common solution is that when it comes to integrate that we become a teacher in a practical teaching base, that we build it and to keep the practical teaching of our job, not only about the experience. When faced with various factors we often have to face questions when they have the very needs of the people and the complexity of these questions, it is not that the work must be just about being satisfied over the way, there are some of such conditions in the good attitudes toward more of what can help to make a professional management or to highlight the knowledge as important factor of the term in this same programme? Therefore, it is an extremely necessary for a professional master's to have a practical under understanding of the major, gives a clear task that it has a theoretical and a complete system of theoretical and combines to enhance that ability to find, analyse and solve problems. At the same time, the school should build a stable practice platform together with enterprises, invite industry mentors to participate in the whole training process, and evaluate the students by the results of solving practical problems rather than only by papers, so that knowledge and action are truly unified in the cultivation of professional degree graduates, and the students can grow in real working situations and meet the demand of the industry and the society for applied high-level talents in the new era of development.</div>
<div class="a" style="left:0;top:47.2px;width:87px;height:0.8px;background:#2b5f67"></div>
<div class="a" style="left:83px;top:45.6px;width:4px;height:2.6px;background:#2b5f67"></div>
</div>
<!-- thumb 4 -->
<div class="t num" style="top:258px">4</div><div class="t star" style="top:271px">★</div><div class="a" style="left:2.6px;top:272.0px;width:0;height:5px;border-left:0.7px dotted #777"></div>
<div class="th" style="top:259px">
<div class="t" style="left:6.5px;top:1.6px;font-size:2.8px;font-weight:bold;color:#222">suggestions</div>
<div class="a" style="left:2px;top:1.5px;width:3px;height:3px;border-right:1px solid #2b5f67;border-top:1px solid #2b5f67;transform:rotate(45deg) scale(.7)"></div>
<svg style="left:24.5px;top:6.3px" width="40" height="40" viewBox="-20 -20 40 40"><path d="M-17.69,-0.68 A17.7,17.7 0 0 1 -0.68,-17.69 L-0.44,-11.39 A11.4,11.4 0 0 0 -11.39,-0.44 Z" fill="#2d97a6"/><path d="M0.68,-17.69 A17.7,17.7 0 0 1 17.69,-0.68 L11.39,-0.44 A11.4,11.4 0 0 0 0.44,-11.39 Z" fill="#1f4e56"/><path d="M17.69,0.68 A17.7,17.7 0 0 1 0.68,17.69 L0.44,11.39 A11.4,11.4 0 0 0 11.39,0.44 Z" fill="#2d97a6"/><path d="M-0.68,17.69 A17.7,17.7 0 0 1 -17.69,0.68 L-11.39,0.44 A11.4,11.4 0 0 0 -0.44,11.39 Z" fill="#1f4e56"/><circle r="14.5" fill="none" stroke="#8fd0d8" stroke-width="4" stroke-dasharray="0.7 1.1" opacity=".35"/><path d="M0.68,-17.69 A17.7,17.7 0 0 1 17.69,-0.68 L11.39,-0.44 A11.4,11.4 0 0 0 0.44,-11.39 Z" fill="#1f4e56"/><path d="M-0.68,17.69 A17.7,17.7 0 0 1 -17.69,0.68 L-11.39,0.44 A11.4,11.4 0 0 0 -0.44,11.39 Z" fill="#1f4e56"/><rect x="-15.9" y="-14.9" width="1.8" height="1.8" fill="#2a4a50"/><rect x="13.1" y="-14.9" width="1.8" height="1.8" fill="#2a4a50"/><rect x="-15.9" y="12.5" width="1.8" height="1.8" fill="#2a4a50"/><rect x="13.1" y="12.5" width="1.8" height="1.8" fill="#2a4a50"/></svg>
<div class="a" style="left:2.4px;top:7px;width:22.6px;height:20.4px;font-size:1.5px;line-height:2.22px;color:#333;white-space:normal;overflow:hidden">Strive the classroom teaching of theoretical study and the teaching of a practical school, we insist on combining the knowledge and ask/listen to the nature of the practices, as an actively focused teaching in professional degree courses and to cooperate with enterprises in building practice bases for students</div>
<div class="a" style="left:5px;top:37.4px;width:21px;height:7.4px;font-size:1.5px;line-height:2.3px;color:#333;white-space:normal;overflow:hidden">There are rather a career as we need professionally to the criterion of professional knowledge evaluation</div>
<div class="a" style="left:63px;top:6.8px;width:21.4px;height:13px;font-size:1.5px;line-height:2.2px;color:#333;white-space:normal;overflow:hidden">Cohere you can read of the school student the student and more guide by it in related professional and conditions of enterprises and schools</div>
<div class="a" style="left:63px;top:31.4px;width:21.4px;height:15.2px;font-size:1.5px;line-height:2.2px;color:#333;white-space:normal;overflow:hidden">Some of the former on-the-job practitioners, among strong models and some, it means bring career for the model communities of the faculty and improves the quality of applied talents</div>
<div class="a" style="left:0;top:47.2px;width:87px;height:0.8px;background:#2b5f67"></div>
<div class="a" style="left:83px;top:45.6px;width:4px;height:2.6px;background:#2b5f67"></div>
</div>
<!-- thumb 5 -->
<div class="t num" style="top:317px">5</div><div class="t star" style="top:330px">★</div><div class="a" style="left:2.6px;top:331.0px;width:0;height:5px;border-left:0.7px dotted #777"></div>
<div class="th" style="top:318px">
<div class="a" style="left:2px;top:1.5px;width:3px;height:3px;border-right:1px solid #2b5f67;border-top:1px solid #2b5f67;transform:rotate(45deg) scale(.7)"></div>
<svg style="left:4px;top:14px" width="20" height="29" viewBox="0 0 20 29"><g filter="url(#b1)"><polygon points="1,7 10,2 14,10 5,16" fill="#5d6266"/><polygon points="3,10 11,8 12,20 5,22" fill="#72777a"/><ellipse cx="13.4" cy="10" rx="3" ry="4.4" fill="#f4f4f4"/><ellipse cx="9" cy="4" rx="3.4" ry="2.4" fill="#cfd2d2"/><rect x="13" y="8" width="3.4" height="5" fill="#c0302a"/><rect x="10" y="17" width="8" height="2.6" fill="#2b2b2b"/><rect x="9" y="20" width="9.4" height="2.6" fill="#d9d9d9"/><rect x="10" y="22.6" width="8" height="2.2" fill="#4a4a4a"/><ellipse cx="6" cy="24.6" rx="2.4" ry="1.6" fill="#c0302a"/><ellipse cx="13" cy="25" rx="2" ry="1.4" fill="#3e66b0"/><path d="M6,18 L10,26 L7,27 Z" fill="#ececec"/></g></svg>
<div class="a" style="left:28.6px;top:9.9px;width:50.4px;height:3.5px;background:#214e56;border-radius:0.6px"></div>
<div class="a" style="left:27px;top:10.7px;width:0;height:0;border-top:1px solid transparent;border-bottom:1px solid transparent;border-right:1.8px solid #214e56"></div>
<div class="a" style="left:28.8px;top:15px;width:50px;height:20.4px;font-size:1.58px;line-height:2.9px;color:#333;white-space:normal;overflow:hidden">All graduates. First, a main way of producing high-quality vocational development, which requires a large number of high-level professionals. The so-called college fully indicated the vocational real track and is responsible to the country. How to plan/training for all graduates, guide personal development clear to specifically and finish the courses qualification with ideas and quite superb education as the most important/influential part of the reform.</div>
<div class="a" style="left:0;top:47.2px;width:87px;height:0.8px;background:#2b5f67"></div>
<div class="a" style="left:83px;top:45.6px;width:4px;height:2.6px;background:#2b5f67"></div>
</div>
<!-- thumb 6 -->
<div class="t star" style="top:389px">★</div><div class="a" style="left:2.6px;top:390.0px;width:0;height:5px;border-left:0.7px dotted #777"></div>
<div class="a" style="left:0;top:372px;width:20px;height:16px;background:#8c8c8c;border-radius:0 3px 3px 0"></div>
<svg style="left:5px;top:375px" width="11" height="10" viewBox="0 0 11 10"><g stroke="#fff" stroke-width="1.3"><line x1="3" y1="1.5" x2="10.5" y2="1.5"/><line x1="3" y1="5" x2="10.5" y2="5"/><line x1="3" y1="8.5" x2="10.5" y2="8.5"/><line x1="0.3" y1="1.5" x2="1.8" y2="1.5"/><line x1="0.3" y1="5" x2="1.8" y2="5"/><line x1="0.3" y1="8.5" x2="1.8" y2="8.5"/></g></svg>
<div class="th" style="top:378px;height:48.5px;background:#24545c;border-radius:1.5px">
<div class="a" style="left:18px;top:3px;width:52px;height:20px;background:repeating-linear-gradient(90deg,#2b5f67 0,#2b5f67 2px,#24545c 2px,#24545c 4.5px);opacity:.8"></div>
<div class="t" style="left:0;width:87px;text-align:center;top:19.6px;font-size:7.6px;color:#eef2f2">感谢您的批评指正</div>
<div class="a" style="left:0;top:43.7px;width:87px;height:0.6px;background:#7f9da2"></div>
<div class="a" style="left:42px;top:42.6px;width:2.8px;height:2.8px;border-radius:50%;background:#dfe8e8"></div>
</div>
<!--/THUMBS-->
<!--SLIDE-->
<svg class="a" id="slide" style="left:140px;top:87px" width="572" height="322" viewBox="0 0 572 322">
<defs>
<linearGradient id="sg" x1="0" y1="0" x2="0" y2="1"><stop offset="0" stop-color="#2c6169"/><stop offset="0.72" stop-color="#2d636a"/><stop offset="0.9" stop-color="#28595f"/><stop offset="1" stop-color="#204c54"/></linearGradient>
<filter id="b1"><feGaussianBlur stdDeviation="0.7"/></filter>
<filter id="b2"><feGaussianBlur stdDeviation="1.6"/></filter>
<filter id="b3"><feGaussianBlur stdDeviation="1.1"/></filter>
<linearGradient id="bg2" x1="0" y1="0" x2="0" y2="1"><stop offset="0" stop-color="#1e4952" stop-opacity="0"/><stop offset="0.7" stop-color="#1e4952" stop-opacity=".8"/><stop offset="1" stop-color="#1d4851" stop-opacity="1"/></linearGradient>
<clipPath id="sc"><rect width="572" height="322"/></clipPath>
</defs>
<rect width="572" height="322" fill="url(#sg)"/>
<g clip-path="url(#sc)">
<g fill="#22505a" filter="url(#b1)">
<polygon points="37.6,68.9 63.7,75.8 55.7,98.1 32.3,88.7"/>
<polygon points="99,82.8 118,77 134,84 136.7,113 102.6,114"/>
<polygon points="57.4,135 82.8,114.8 92,117.6 109.6,134 82.8,152.3"/>
<polygon points="139.8,122.4 158.3,109.6 165,111.3 175,122.4 156.5,135"/>
<polygon points="483.3,97 511,78.5 527.5,75 523.7,98.7 509.4,107.7 498,102.2 495.5,94"/>
<polygon points="526,86 528,85 540,105 538,106"/>
<polygon points="427.7,137 441.6,119.6 459,131.7 450.3,152.6 436.3,147.4"/>
<polygon points="459,133.5 481.6,124.8 488.5,137 483.3,159.6 462.4,163"/>
<polygon points="471,117.8 488.5,110.9 492,114.3 476.3,123"/>
<polygon points="500.7,196 518,182 526.8,196 525,212 505,214"/>
<polygon points="530,177 537,190 561.6,177 568.5,189 566,205 572,260 560,260 548,216 537,200"/>
<polygon points="167,190 182,178 196,186 200,204 178,210 168,200"/><polygon points="186,204 196,200 204,236 196,240"/>
<polygon points="0,212 10,214 14,229 0,233"/>
<polygon points="405,206.5 419,189 420,191 408,208"/><polygon points="417,189 421,215 419,254 391,256 402,232"/>
</g>
<!-- crowd silhouette -->
<g filter="url(#b2)">
<path fill="#214e57" d="M0,246 L16,262 L32,262 L34,246 L47,238 L62,246 L64,266 L76,260 L88,250 L98,246 L100,230 L110,220 L120,228 L122,248 L134,254 L142,246 L148,232 L156,226 L164,232 L170,226 L166,216 L178,208 L196,214 L204,232 L216,236 L236,240 L262,238 L300,240 L340,238 L366,232 L372,226 L380,222 L390,228 L393,250 L402,236 L417,190 L421,238 L431,232 L440,220 L449,226 L456,244 L470,238 L474,224 L482,219 L490,224 L495,242 L506,244 L509,232 L518,227 L527,232 L531,250 L546,244 L558,238 L572,226 L572,322 L0,322 Z"/>
</g>
<g fill="#1e4851" filter="url(#b1)"><ellipse cx="46" cy="255.5" rx="12.7" ry="13.1"/><ellipse cx="110" cy="230.5" rx="11.2" ry="11.6"/><ellipse cx="106" cy="260.5" rx="10.8" ry="11.2"/><ellipse cx="114" cy="289.5" rx="11.7" ry="12.1"/><ellipse cx="157" cy="237.5" rx="10.7" ry="11.1"/><ellipse cx="167" cy="254.5" rx="11.2" ry="11.6"/><ellipse cx="174" cy="291.5" rx="12.2" ry="12.6"/><ellipse cx="26" cy="289.5" rx="12.2" ry="12.6"/><ellipse cx="203" cy="249.5" rx="11.2" ry="11.6"/><ellipse cx="262" cy="297.5" rx="11.2" ry="11.6"/><ellipse cx="316" cy="301.5" rx="11.2" ry="11.6"/><ellipse cx="360" cy="297.5" rx="11.2" ry="11.6"/><ellipse cx="379" cy="233.5" rx="12.7" ry="13.1"/><ellipse cx="440" cy="229.5" rx="10.7" ry="11.1"/><ellipse cx="482" cy="229.5" rx="11.7" ry="12.1"/><ellipse cx="518" cy="238.5" rx="12.7" ry="13.1"/><ellipse cx="447" cy="280.5" rx="12.7" ry="13.1"/><ellipse cx="395" cy="278.5" rx="11.7" ry="12.1"/><ellipse cx="420" cy="259.5" rx="10.2" ry="10.6"/><ellipse cx="500" cy="273.5" rx="10.7" ry="11.1"/><ellipse cx="548" cy="267.5" rx="10.7" ry="11.1"/><ellipse cx="476" cy="297.5" rx="11.2" ry="11.6"/><ellipse cx="530" cy="297.5" rx="11.2" ry="11.6"/><ellipse cx="80" cy="301.5" rx="11.2" ry="11.6"/><ellipse cx="140" cy="301.5" rx="10.2" ry="10.6"/><ellipse cx="215" cy="297.5" rx="11.2" ry="11.6"/><path d="M26.1,292.2 Q27.9,268.4 46,266.6 Q64.0,268.4 66.0,292.2 Z"/><path d="M93.2,261.8 Q94.8,241.8 110,240.2 Q125.2,241.8 126.8,261.8 Z"/><path d="M90.0,290.4 Q91.6,271.4 106,269.8 Q120.4,271.4 122.0,290.4 Z"/><path d="M96.2,322.6 Q97.8,301.4 114,299.6 Q130.2,301.4 131.8,322.6 Z"/><path d="M141.2,267.0 Q142.8,248.2 157,246.8 Q171.2,248.2 172.8,267.0 Z"/><path d="M150.2,285.8 Q151.8,265.8 167,264.2 Q182.2,265.8 183.8,285.8 Z"/><path d="M155.1,326.4 Q156.9,303.9 174,302.1 Q191.1,303.9 192.9,326.4 Z"/><path d="M7.1,324.4 Q8.9,301.9 26,300.1 Q43.1,301.9 44.9,324.4 Z"/><path d="M186.2,280.8 Q187.8,260.8 203,259.2 Q218.2,260.8 219.8,280.8 Z"/><path d="M197.3,287.2 Q198.7,269.7 212,268.3 Q225.3,269.7 226.7,287.2 Z"/><path d="M219.0,321.0 Q221.0,296.0 240,294.0 Q259.0,296.0 261.0,321.0 Z"/><path d="M272.0,318.0 Q274.0,293.0 293,291.0 Q312.0,293.0 314.0,318.0 Z"/><path d="M315.1,319.4 Q316.9,296.9 334,295.1 Q351.1,296.9 352.9,319.4 Z"/><path d="M245.2,328.8 Q246.8,308.8 262,307.2 Q277.2,308.8 278.8,328.8 Z"/><path d="M299.2,332.8 Q300.8,312.8 316,311.2 Q331.2,312.8 332.8,332.8 Z"/><path d="M343.2,328.8 Q344.8,308.8 360,307.2 Q375.2,308.8 376.8,328.8 Z"/><path d="M359.1,270.2 Q360.9,246.4 379,244.6 Q397.1,246.4 398.9,270.2 Z"/><path d="M424.2,259.0 Q425.8,240.2 440,238.8 Q454.2,240.2 455.8,259.0 Z"/><path d="M464.1,262.6 Q465.9,241.3 482,239.7 Q498.1,241.3 499.9,262.6 Z"/><path d="M498.1,275.2 Q499.9,251.4 518,249.6 Q536.0,251.4 538.0,275.2 Z"/><path d="M427.1,317.2 Q428.9,293.4 447,291.6 Q465.1,293.4 466.9,317.2 Z"/><path d="M377.1,311.6 Q378.9,290.4 395,288.6 Q411.1,290.4 412.9,311.6 Z"/><path d="M405.3,287.2 Q406.7,269.7 420,268.3 Q433.3,269.7 434.7,287.2 Z"/><path d="M484.2,303.0 Q485.8,284.2 500,282.8 Q514.2,284.2 515.8,303.0 Z"/><path d="M532.2,297.0 Q533.8,278.2 548,276.8 Q562.2,278.2 563.8,297.0 Z"/><path d="M459.2,328.8 Q460.8,308.8 476,307.2 Q491.2,308.8 492.8,328.8 Z"/><path d="M513.2,328.8 Q514.8,308.8 530,307.2 Q545.2,308.8 546.8,328.8 Z"/><path d="M63.2,332.8 Q64.8,312.8 80,311.2 Q95.2,312.8 96.8,332.8 Z"/><path d="M125.3,329.2 Q126.7,311.7 140,310.3 Q153.3,311.7 154.7,329.2 Z"/><path d="M198.2,328.8 Q199.8,308.8 215,307.2 Q230.2,308.8 231.8,328.8 Z"/></g>
<g fill="#35686e" filter="url(#b3)" opacity=".8"><ellipse cx="46" cy="258.5" rx="7.8" ry="9.5"/><ellipse cx="110" cy="233.5" rx="6.6" ry="8"/><ellipse cx="106" cy="263.5" rx="6.2" ry="7.6"/><ellipse cx="114" cy="292.5" rx="7.0" ry="8.5"/><ellipse cx="157" cy="240.5" rx="6.1" ry="7.5"/><ellipse cx="167" cy="257.5" rx="6.6" ry="8"/><ellipse cx="174" cy="294.5" rx="7.4" ry="9"/><ellipse cx="26" cy="292.5" rx="7.4" ry="9"/><ellipse cx="203" cy="252.5" rx="6.6" ry="8"/><ellipse cx="212" cy="262.5" rx="5.7" ry="7"/><ellipse cx="240" cy="285.5" rx="8.2" ry="10"/><ellipse cx="293" cy="282.5" rx="8.2" ry="10"/><ellipse cx="334" cy="287.5" rx="7.4" ry="9"/><ellipse cx="262" cy="300.5" rx="6.6" ry="8"/><ellipse cx="316" cy="304.5" rx="6.6" ry="8"/><ellipse cx="360" cy="300.5" rx="6.6" ry="8"/><ellipse cx="379" cy="236.5" rx="7.8" ry="9.5"/><ellipse cx="440" cy="232.5" rx="6.1" ry="7.5"/><ellipse cx="482" cy="232.5" rx="7.0" ry="8.5"/><ellipse cx="518" cy="241.5" rx="7.8" ry="9.5"/><ellipse cx="447" cy="283.5" rx="7.8" ry="9.5"/><ellipse cx="395" cy="281.5" rx="7.0" ry="8.5"/><ellipse cx="420" cy="262.5" rx="5.7" ry="7"/><ellipse cx="500" cy="276.5" rx="6.1" ry="7.5"/><ellipse cx="548" cy="270.5" rx="6.1" ry="7.5"/><ellipse cx="476" cy="300.5" rx="6.6" ry="8"/><ellipse cx="530" cy="300.5" rx="6.6" ry="8"/><ellipse cx="80" cy="304.5" rx="6.6" ry="8"/><ellipse cx="140" cy="304.5" rx="5.7" ry="7"/><ellipse cx="215" cy="300.5" rx="6.6" ry="8"/>
<path d="M247,250 L254,256 L262,250 L260,248 L254,253 L249,248 Z"/>
<ellipse cx="320" cy="262" rx="3" ry="11" transform="rotate(12 320 262)"/>
<ellipse cx="196" cy="247" rx="4" ry="3"/>
</g>
<rect y="296" width="572" height="26" fill="url(#bg2)"/>
<!-- white circle -->
<circle cx="286" cy="154" r="97" fill="#fdfdfd"/>
<!-- doc + pen icon (coords local to slide) -->
<g transform="translate(-140,-86)">
<path d="M410.5,152.3 H433.5 Q437.5,152.3 437.5,156 V193 Q437.5,197 433.5,197 H405.8 Q401.9,197 401.9,193 V161 Z" fill="#fdfdfd" stroke="#23505a" stroke-width="5.2" stroke-linejoin="round"/>
<path d="M404.5,164 H414 V154.6" fill="none" stroke="#23505a" stroke-width="1.6"/>
<g stroke="#23505a" stroke-width="2.2">
<line x1="419" y1="160.4" x2="431" y2="160.4"/>
<line x1="409.3" y1="166.8" x2="431" y2="166.8"/>
<line x1="409.3" y1="173" x2="431" y2="173"/>
<line x1="409.3" y1="179.6" x2="416" y2="179.6"/>
</g>
<g transform="translate(425.3,204.8) rotate(30.5)">
<g fill="#fdfdfd" stroke="#fdfdfd" stroke-width="3.4" stroke-linejoin="round">
<polygon points="0,0 -4.6,-13 4.6,-13"/>
<path d="M-5,-15 H5 V-37.5 Q5,-42 0,-42 Q-5,-42 -5,-37.5 Z"/>
<path d="M7.4,-27 V-38 Q7.4,-43 2,-43.6" fill="none" stroke-width="4.5"/>
</g>
<polygon points="0,0 -4.7,-13 4.7,-13" fill="#23505a"/>
<path d="M-5,-15 H5 V-37.5 Q5,-42 0,-42 Q-5,-42 -5,-37.5 Z" fill="#23505a"/>
<path d="M7.4,-27 V-38 Q7.4,-43.2 2,-43.6" fill="none" stroke="#23505a" stroke-width="1.7" stroke-linecap="round"/>
</g>
</g>
</svg>

<div class="a" id="stext" style="left:326px;top:209.8px;width:200px;text-align:center;font-weight:bold;font-size:11.35px;line-height:12.88px;color:#1f4955;letter-spacing:0.06px;white-space:nowrap">
<div><span class="ur">Combineknowledge</span> and</div>
<div><span class="ur">action,strengthen</span></div>
<div><span class="ur">practice,improve</span> graduate</div>
<div>students<span style="display:inline-block;width:9px"></span>‘<span style="display:inline-block;width:3.4px"></span>theoretical</div>
<div>application <span class="ur">ability,and</span></div>
<div>cultivate <span class="ub">graduates</span> students</div>
<div>more adaptable to the needs</div>
<div>of times</div>
</div>
<!--/SLIDE-->
<!--NOTES-->
<div class="t" style="left:121px;top:425px;font-size:6.5px;font-weight:bold;color:#3c3c3c;font-family:'Liberation Serif','Noto Serif CJK SC',serif">单击此处添加备注</div>
<div class="a" style="left:117px;top:411px;width:596px;height:1.4px;background:#dedede"></div>
<div class="a" style="left:728.8px;top:352.6px;width:5px;height:30px;border-radius:2.5px;background:#fafafa;border:0.8px solid #999"></div>
<div class="a" style="left:730.6px;top:361px;width:1.6px;height:20px;background:#e08a4a;border-radius:1px"></div>
<!--/NOTES-->
<div class="a" id="status"></div>
<div class="a" id="botdark"></div>
<!--STATUS-->
<svg style="left:95.5px;top:444px" width="8" height="8" viewBox="0 0 8 8"><circle cx="4" cy="1.6" r="1" fill="none" stroke="#666" stroke-width="0.6"/><path d="M0.8,3 H7.2 M4,3 V5 M4,5 L2,7.6 M4,5 L6,7.6" fill="none" stroke="#666" stroke-width="0.7"/></svg>
<div class="t" style="left:104.6px;top:445.4px;font-size:6.3px;color:#4a4a4a">辅助功能: 调查</div>
<svg style="left:480px;top:444.4px" width="8" height="7" viewBox="0 0 8 7"><path d="M0.4,6.4 H7.6 M1.4,4.6 H6.6 M2.4,2.8 H5.6 M3.4,1 H4.6" stroke="#666" stroke-width="0.9"/></svg>
<div class="t" style="left:488.6px;top:445px;font-size:6.2px;color:#5c5c5c">备注</div>
<svg style="left:511px;top:444.6px" width="8" height="7" viewBox="0 0 8 7"><path d="M0.4,0.4 H7.6 V4.6 H3.6 L2,6.4 V4.6 H0.4 Z" fill="#4a4a4a"/></svg>
<div class="t" style="left:520.6px;top:445px;font-size:6.2px;color:#5c5c5c">批注</div>
<div class="a" style="left:538.6px;top:442.6px;width:18.2px;height:11.4px;background:#a5a5a5"></div>
<svg style="left:544.4px;top:444.6px" width="7" height="7" viewBox="0 0 7 7"><rect x="0.4" y="0.4" width="6.2" height="6.2" fill="none" stroke="#fff" stroke-width="0.8"/><rect x="0.4" y="0.4" width="2" height="6.2" fill="#fff"/><rect x="3.6" y="1.8" width="1.8" height="1.6" fill="#fff"/></svg>
<svg style="left:561.6px;top:444.8px" width="9" height="7" viewBox="0 0 9 7"><rect x="0.2" y="0.2" width="3.4" height="2.4" fill="#555"/><rect x="5" y="0.2" width="3.4" height="2.4" fill="#555"/><rect x="0.2" y="4" width="3.4" height="2.4" fill="#555"/><rect x="5" y="4" width="3.4" height="2.4" fill="#555"/></svg>
<svg style="left:580px;top:444.6px" width="9" height="7" viewBox="0 0 9 7"><path d="M0.5,0.6 H4.2 V6.4 H0.5 Z M4.2,0.6 H7.9 V6.4 H4.2 Z" fill="#c9c9c9" stroke="#777" stroke-width="0.7"/></svg>
<svg style="left:598.6px;top:444.4px" width="9" height="8" viewBox="0 0 9 8"><path d="M0.5,0.6 H8.1 V4.8 H0.5 Z M4.3,4.8 V6.6 M2.6,7.2 H6" fill="none" stroke="#555" stroke-width="0.8"/></svg>
<div class="a" style="left:616px;top:447.6px;width:3.6px;height:0.9px;background:#555"></div>
<div class="a" style="left:623px;top:447.6px;width:51px;height:1px;background:#8f8f8f"></div>
<div class="a" style="left:646px;top:444.4px;width:7.4px;height:7.4px;border-radius:50%;background:#fdfdfd;box-shadow:0 0 0.6px rgba(0,0,0,.4)"></div>
<div class="a" style="left:678.4px;top:447.6px;width:4px;height:0.9px;background:#555"></div>
<div class="a" style="left:680px;top:446px;width:0.9px;height:4px;background:#555"></div>
<div class="t" style="left:691px;top:445px;font-size:6.3px;color:#5c5c5c">117%</div>
<svg style="left:716px;top:444.4px" width="8" height="8" viewBox="0 0 8 8"><path d="M0.5,2.4 V0.5 H2.4 M5.6,0.5 H7.5 V2.4 M7.5,5.6 V7.5 H5.6 M2.4,7.5 H0.5 V5.6" fill="none" stroke="#555" stroke-width="0.8"/><path d="M2.4,2.4 L5.6,5.6 M5.6,2.4 L2.4,5.6" stroke="#777" stroke-width="0.6"/></svg>
<!--/STATUS-->
<!--VIDEO-->
<div class="a" style="left:580px;top:38px;width:140px;height:99.6px;background:#24292b"></div>
<!-- header -->
<svg style="left:586px;top:43.4px" width="9" height="11" viewBox="0 0 9 11"><rect x="3" y="0.6" width="3" height="5.8" rx="1.5" fill="#9a9a9a"/><path d="M1.4,4.6 Q1.4,8 4.5,8 Q7.6,8 7.6,4.6 M4.5,8 V10" fill="none" stroke="#8c8c8c" stroke-width="0.8"/><path d="M0.8,9.6 L8.2,0.8" stroke="#e0574a" stroke-width="0.9"/></svg>
<div class="t" style="left:605.4px;top:45px;font-size:7.15px;color:#f0f0f0">正在讲话: 雷雨晨;</div>
<svg style="left:686px;top:41.4px" width="28" height="14" viewBox="0 0 28 14"><g fill="#4f5557"><polygon points="1,7.4 7.6,0.8 11,4.2 11,10.6 7.6,13.4"/><polygon points="12.4,4.4 16,0.8 19.4,4.2 16,10 13.6,11.4"/><polygon points="16.6,10.4 21.6,2.4 27,7.6 22.4,12.6"/></g></svg>
<!-- video -->
<svg style="left:582px;top:60.2px" width="136" height="76.2" viewBox="0 0 136 76" preserveAspectRatio="none">
<defs>
<filter id="vb"><feGaussianBlur stdDeviation="0.8"/></filter>
<filter id="vb2"><feGaussianBlur stdDeviation="1.6"/></filter>
<linearGradient id="rg" x1="0" y1="0" x2="0" y2="1"><stop offset="0" stop-color="#aab3c3"/><stop offset="0.3" stop-color="#8b97ab"/><stop offset="1" stop-color="#6b788c"/></linearGradient>
<linearGradient id="fg" x1="0" y1="0" x2="0" y2="1"><stop offset="0" stop-color="#e6bea6"/><stop offset="0.6" stop-color="#dcab94"/><stop offset="1" stop-color="#c99480"/></linearGradient>
<clipPath id="vc"><rect width="136" height="76"/></clipPath>
</defs>
<g clip-path="url(#vc)">
<rect width="136" height="76" fill="#e4e7ec"/>
<rect x="0" y="0" width="48" height="76" fill="#e9ecf1"/>
<g fill="#aeb2b9" filter="url(#vb)"><rect x="9" y="0" width="2.2" height="64"/><rect x="19" y="0" width="2.6" height="64"/><rect x="25.6" y="8" width="1.6" height="56"/><rect x="32" y="4" width="2.4" height="60"/><polygon points="8,0 22,0 34,16 32,18"/></g>
<rect x="0" y="0" width="1.6" height="76" fill="#c9ccd2"/>
<rect x="86" y="0" width="50" height="76" fill="url(#rg)"/>
<rect x="86" y="0" width="50" height="11" fill="#b2bac8" opacity=".8"/>
<g filter="url(#vb)">
<polygon points="118,24 125.6,14.6 127,12 128.4,14.6 134.6,24 134,27.4 118.6,27.4" fill="#eef0f4"/>
<rect x="126" y="0" width="1.2" height="13" fill="#d5d9e0"/>
<polygon points="108,44 136,40 136,58 112,58" fill="#dfe1e4"/>
<polygon points="104,50 118,50 124,76 100,76" fill="#9fa2a3"/>
<polygon points="122,56 136,54 136,76 124,76" fill="#e6e7e8"/>
<rect x="110" y="58" width="14" height="8" fill="#3c4244"/>
</g>
<!-- hair -->
<path d="M53,0 Q48,22 44,40 Q40,58 38,76 H111 Q111,62 109.5,48 Q105,20 94,0 Z" fill="#2a1b17" filter="url(#vb)"/>
<path d="M47,40 Q42,58 44,76 H52 Q48,58 52,42 Z" fill="#4a3029" filter="url(#vb)"/>
<!-- shoulder / clothes -->
<path d="M108,50 Q117,58 125,76 H108 Z" fill="#c9cbcf" filter="url(#vb)"/><path d="M104,40 Q110,56 108,76 H100 Q104,58 101,42 Z" fill="#3a2620" filter="url(#vb)"/>
<!-- neck -->
<path d="M60,56 H86 L88,76 H58 Z" fill="#c08e7a" filter="url(#vb)"/>
<!-- face -->
<path d="M54,20 Q54,3 72,3 Q92,3 93,22 Q94,40 86,54 Q78,66 72,66 Q64,66 58,54 Q53,40 54,20 Z" fill="url(#fg)" filter="url(#vb)"/>
<path d="M54,2 Q64,-3 76,1 Q67,5 62,13 Q58,20 56.5,32 Q51,16 54,2 Z" fill="#2a1b17" filter="url(#vb)"/>
<path d="M75,0 Q88,0 94,8 Q97,22 94,38 Q92,22 86,11 Q82,5 75,2 Z" fill="#2a1b17" filter="url(#vb)"/><path d="M101,28 Q105,40 104,52 Q102,40 99,30 Z" fill="#6a4638" filter="url(#vb)"/>
<!-- glasses -->
<g fill="rgba(240,225,222,.25)" stroke="#ead7d4" stroke-width="1.3" filter="url(#vb)" opacity=".9"><rect x="52.4" y="24.6" width="17.4" height="13.6" rx="4.6"/><rect x="76" y="24.6" width="17.4" height="13.6" rx="4.6"/><path d="M69.8,29 Q73,27.4 76,29" fill="none"/></g>
<g fill="#3f2a24" filter="url(#vb)" opacity=".8"><ellipse cx="61.8" cy="31" rx="3.4" ry="1.5"/><ellipse cx="84.2" cy="31" rx="3.4" ry="1.5"/><ellipse cx="61.4" cy="25.2" rx="4.6" ry="0.9" opacity=".6"/><ellipse cx="84.6" cy="25.2" rx="4.6" ry="0.9" opacity=".6"/></g>
<path d="M70.6,38 Q72.6,42.6 75,39" fill="none" stroke="#c48f7c" stroke-width="1.2" filter="url(#vb)"/>
<!-- lips -->
<ellipse cx="71.6" cy="49.2" rx="6" ry="2.9" fill="#c9697a" filter="url(#vb)"/>
<ellipse cx="71.6" cy="48.6" rx="3.6" ry="1" fill="#7a3540" filter="url(#vb)"/>
<!-- name label -->
<rect x="0" y="63" width="38.6" height="13" fill="#2a2c2e" opacity=".82"/>
<rect x="3.2" y="65.4" width="3" height="5.6" rx="1.5" fill="#f4f4f4"/>
<path d="M1.8,69 Q1.8,72.4 4.7,72.4 Q7.6,72.4 7.6,69 M4.7,72.4 V74" fill="none" stroke="#f4f4f4" stroke-width="0.8"/>
<text x="9.6" y="73.2" font-family="'Liberation Sans','Noto Sans CJK SC',sans-serif" font-size="9" fill="#fafafa">雷雨晨</text>
</g>
</svg>
<!--/VIDEO-->
<!--SHARELABEL-->
<div class="a" style="left:0;top:446.6px;width:94.4px;height:13.4px;background:#1d2021;border-top-right-radius:2px"></div>
<svg style="left:1px;top:449.4px" width="8" height="8" viewBox="0 0 8 8"><rect x="0.2" y="0.4" width="7.4" height="5.4" rx="0.8" fill="#f2f2f2"/><rect x="2" y="6.4" width="3.8" height="1" fill="#f2f2f2"/><path d="M2.6,3.6 L3.8,2.2 L5,3.6" fill="none" stroke="#1d2021" stroke-width="0.7"/></svg>
<svg style="left:10.6px;top:448.6px" width="7" height="10" viewBox="0 0 7 10"><rect x="2" y="0.4" width="3" height="5.6" rx="1.5" fill="#49c36b"/><path d="M0.8,4.4 Q0.8,7.4 3.5,7.4 Q6.2,7.4 6.2,4.4 M3.5,7.4 V9" fill="none" stroke="#e8e8e8" stroke-width="0.8"/></svg>
<div class="t" style="left:19.8px;top:449.6px;font-size:9.1px;color:#fafafa">雷雨晨的屏幕共享</div>
<!--/SHARELABEL-->
</body>
</html>
